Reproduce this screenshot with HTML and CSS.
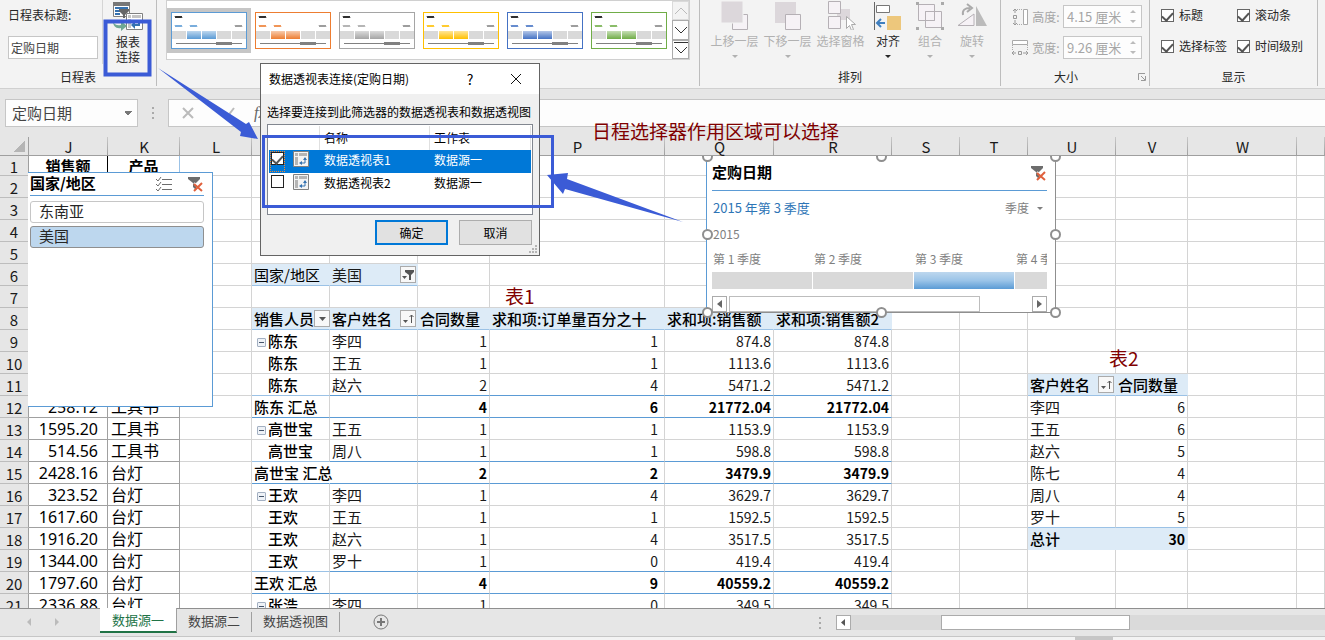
FILE: index.html
```
<!DOCTYPE html>
<html lang="zh-CN">
<head>
    <meta charset="UTF-8">
    <meta name="viewport" content="width=device-width, initial-scale=1.0">
    <title>数据透视表连接</title>
    <link rel="stylesheet" href="styles.css">
</head>
<body>

<svg class="defs" aria-hidden="true">
    <defs>
        <linearGradient id="fade" x1="0" y1="0" x2="0" y2="1">
            <stop offset="0" stop-color="#fff" stop-opacity="0.6"/>
            <stop offset="1" stop-color="#fff" stop-opacity="0"/>
        </linearGradient>
        <symbol id="thumb" viewBox="0 0 74 35">
            <path d="M3 3l1 2 1-2 1 2 1-2 1 2 1-2 1 2" fill="none" stroke="#000"/>
            <path d="M3 12l1 2 1-2 1 2 1-2 1 2 1-2 1 2M18 12l1 2 1-2 1 2 1-2 1 2 1-2 1 2" fill="none" stroke="currentColor"/>
            <path d="M63 12l1 2 1-2 1 2 1-2 1 2 1-2 1 2" fill="none" stroke="#888"/>
            <path d="M0 18h14v8H0zM45 18h14v8H45zM60 18h14v8H60z" fill="#d9d9d9"/>
            <path d="M15 18h14v8H15zM30 18h14v8H30z" fill="currentColor"/>
            <path d="M15 18h14v8H15zM30 18h14v8H30z" fill="url(#fade)"/>
            <path d="M4 30h66v1H4z" fill="#808080"/>
            <path d="M44 29h16v3H44z" fill="#808080"/>
        </symbol>
        <symbol id="clear-filter" viewBox="0 0 17 17">
            <path d="M1 1h12v2L9 7v6H8L6 11V7L1 3z" fill="#6d6d6d"/>
            <path d="M7 7l10 10M17 7L7 17" stroke="#fff" stroke-width="2"/>
            <path d="M7 8l8 7M15 7l-8 8" stroke="#e0603c" stroke-width="2"/>
        </symbol>
        <symbol id="pivot" viewBox="0 0 16 16">
            <path d="M.5.5h15v15H.5z" fill="#f4f4f4" stroke="#808080"/>
            <path d="M2 2h3v3H2zM6 2h8v3H6zM2 6h3v8H2z" fill="#b5b5b5"/>
            <path d="M8 12h4V7" fill="none" stroke="#3572b0"/>
            <path d="M6 12l3-2v4zM12 6l2 3h-4z" fill="#3572b0"/>
        </symbol>
        <symbol id="sort" viewBox="0 0 14 14">
            <path d="M2 8h5L4.500 11z" fill="#555"/>
            <path d="M10.500 3v8M8.500 5l2-2 2 2" fill="none" stroke="#555"/>
        </symbol>
    </defs>
</svg>

<header class="ribbon">
    <section class="group group-caption">
        <div class="group-body">
            <div class="caption-field">
                <label for="caption">日程表标题:</label>
                <input type="text" id="caption" value="定购日期">
            </div>
            <button class="report-btn" type="button">
                <svg width="32" height="30" viewBox="0 0 32 30">
                    <path d="M1.500 1.500h16v14h-16z" fill="#fff" stroke="#808080"/>
                    <path d="M1 1h17v4H1z" fill="#777"/>
                    <path d="M3 7h13M3 10h5M3 13h5" stroke="#3572b0" stroke-width="2"/>
                    <path d="M7 8h10v2l-4 4v3h-2v-3l-4-4z" fill="#666"/>
                    <path d="M14.500 12.500h16v16h-16z" fill="#fff" stroke="#808080"/>
                    <path d="M16 14h3v3h-3zM20 14h9v3h-9zM16 18h3v9h-3z" fill="#c4c4c4"/>
                    <path d="M22 24h5v-5" fill="none" stroke="#3572b0" stroke-width="2"/>
                    <path d="M19 24l4-4v8z" fill="#3572b0"/>
                    <path d="M1 20c1 4 5 5 8 4v-4l6 5-6 5v-3C4 28 1 25 1 20z" fill="#6fa893"/>
                </svg>
                <span>报表<br>连接</span>
            </button>
        </div>
        <h2>日程表</h2>
    </section>

    <section class="group group-styles">
        <div class="gallery">
            <div class="thumbs">
                <button class="thumb blue selected" type="button" aria-label="浅蓝"><svg><use href="#thumb"/></svg></button>
                <button class="thumb orange" type="button" aria-label="橙色"><svg><use href="#thumb"/></svg></button>
                <button class="thumb gray" type="button" aria-label="灰色"><svg><use href="#thumb"/></svg></button>
                <button class="thumb gold" type="button" aria-label="金色"><svg><use href="#thumb"/></svg></button>
                <button class="thumb navy" type="button" aria-label="蓝色"><svg><use href="#thumb"/></svg></button>
                <button class="thumb green" type="button" aria-label="绿色"><svg><use href="#thumb"/></svg></button>
            </div>
            <div class="gallery-scroll">
                <button type="button" aria-label="上一行" disabled><svg width="16" height="16"><path d="M2 11l6-6 6 6" fill="none" stroke="#bbb"/></svg></button>
                <button type="button" aria-label="下一行"><svg width="16" height="16"><path d="M2 5l6 6 6-6" fill="none" stroke="#333"/></svg></button>
                <button type="button" aria-label="其他"><svg width="16" height="16"><path d="M1 1.500h14M2 6l6 6 6-6" fill="none" stroke="#333"/></svg></button>
            </div>
        </div>
    </section>

    <section class="group group-arrange">
        <div class="group-body">
            <button class="tool wide" type="button" disabled>
                <svg width="30" height="30"><path d="M12.500 14.500h15v15h-15z" fill="#f6f2f6" stroke="#b5b0b5"/><path d="M1 1h22v22H1z" fill="#dcd7db" stroke="#f3f3f3"/></svg>
                上移一层<i class="caret"></i>
            </button>
            <button class="tool wide" type="button" disabled>
                <svg width="30" height="30"><path d="M2 2h21v21H2z" fill="#dcd7db"/><path d="M12.500 14.500h15v15h-15z" fill="#f6f2f6" stroke="#b5b0b5"/></svg>
                下移一层<i class="caret"></i>
            </button>
            <button class="tool wide" type="button" disabled>
                <svg width="30" height="30"><path d="M11 9h13v11H11z" fill="#dcd7db"/><path d="M2.500 1.500h12v12h-12zM2.500 16.500h12v12h-12z" fill="#f6f2f6" stroke="#b5b0b5"/><path d="M20.500 16.500v12l3-3 2 5 2-1-2-5h4z" fill="#fff" stroke="#aaa"/></svg>
                选择窗格<i class="caret hidden"></i>
            </button>
            <button class="tool" type="button">
                <svg width="30" height="30"><path d="M1.500 2v28" stroke="#666"/><path d="M3.500 5.500h13v7h-13z" fill="#fff" stroke="#777"/><path d="M14 16h14v14H14z" fill="#edc77c"/><path d="M4 23h8M8 19l-4 4 4 4" fill="none" stroke="#3f7fbf" stroke-width="2"/></svg>
                对齐<i class="caret"></i>
            </button>
            <button class="tool" type="button" disabled>
                <svg width="30" height="30"><path d="M3.500 4.500h16v16h-16zM10.500 11.500h16v16h-16z" fill="#f6f2f6" stroke="#b5b0b5"/><path d="M10.500 11.500h9v9h-9z" fill="none" stroke="#b5b0b5"/><path d="M1 2h3v3H1zM26 2h3v3h-3zM1 27h3v3H1zM26 27h3v3h-3z" fill="#aaa"/></svg>
                组合<i class="caret"></i>
            </button>
            <button class="tool" type="button" disabled>
                <svg width="32" height="30"><path d="M2 25.500h16V14z" fill="#f6f2f6" stroke="#b5b0b5"/><path d="M20 6v20h11z" fill="#bbb"/><path d="M7 15c-1-5 2-7 7-7M11 4l5 4-5 4" fill="none" stroke="#aaa" stroke-width="2"/></svg>
                旋转<i class="caret"></i>
            </button>
        </div>
        <h2>排列</h2>
    </section>

    <section class="group group-size">
        <div class="size-rows">
            <div class="size-row">
                <svg width="18" height="18"><path d="M12.500 1.500h4v15h-4z" fill="#fff" stroke="#aaa"/><path d="M4 1v4M4 12v5M2 3l2-2 2 2M2 15l2 2 2-2M2.500 7.500h3v3h-3z" fill="none" stroke="#999"/><path d="M6 1.500h6M6 16.500h6" stroke="#aaa" stroke-dasharray="1 1"/></svg>
                <label for="height">高度:</label>
                <span class="spin"><input type="text" id="height" value="4.15 厘米" disabled><i></i></span>
            </div>
            <div class="size-row">
                <svg width="18" height="18"><path d="M1.500 1.500h15v4h-15z" fill="#fff" stroke="#aaa"/><path d="M1 14h4M12 14h5M3 12l-2 2 2 2M15 12l2 2-2 2M7.500 12.500h3v3h-3z" fill="none" stroke="#999"/><path d="M1.500 6v6M16.500 6v6" stroke="#aaa" stroke-dasharray="1 1"/></svg>
                <label for="width">宽度:</label>
                <span class="spin"><input type="text" id="width" value="9.26 厘米" disabled><i></i></span>
            </div>
        </div>
        <h2>大小
            <button class="launcher" type="button" aria-label="大小和属性"><svg width="8" height="8"><path d="M.5 7V.5H7M3 3l4 4M7.500 3v4.500H3" fill="none" stroke="#999"/></svg></button>
        </h2>
    </section>

    <section class="group group-show">
        <div class="checks">
            <label><input type="checkbox" checked>标题</label>
            <label><input type="checkbox" checked>滚动条</label>
            <label><input type="checkbox" checked>选择标签</label>
            <label><input type="checkbox" checked>时间级别</label>
        </div>
        <h2>显示</h2>
    </section>
</header>

<div class="formula-row">
    <select class="name-box" aria-label="名称框"><option>定购日期</option></select>
    <span class="dots"></span>
    <div class="formula-box">
        <button type="button" aria-label="取消输入"><svg width="12" height="12"><path d="M1 1l10 10M11 1L1 11" stroke="#bbb" stroke-width="2"/></svg></button>
        <button type="button" aria-label="输入"><svg width="12" height="12"><path d="M1 6l3 4 7-9" fill="none" stroke="#bbb" stroke-width="2"/></svg></button>
        <button type="button" class="fx">fx</button>
        <input type="text" aria-label="编辑栏">
    </div>
</div>

<main class="sheet">
    <table class="grid">
        <colgroup>
            <col class="w-head"><col class="w-j"><col class="w-72"><col class="w-72"><col class="w-m"><col class="w-88"><col class="w-72"><col class="w-p"><col class="w-109"><col class="w-r"><col class="w-68"><col class="w-68"><col class="w-88"><col class="w-72"><col class="w-109"><col>
        </colgroup>
        <thead>
            <tr><th class="corner"></th><th>J</th><th>K</th><th>L</th><th>M</th><th>N</th><th>O</th><th>P</th><th>Q</th><th>R</th><th>S</th><th>T</th><th>U</th><th>V</th><th>W</th><th></th></tr>
        </thead>
        <tbody>
            <tr class="first"><th>1</th><td>销售额</td><td>产品</td><td></td><td></td><td></td><td></td><td></td><td></td><td></td><td></td><td></td><td></td><td></td><td></td><td></td></tr>
            <tr><th>2</th><td></td><td></td><td></td><td></td><td></td><td></td><td></td><td></td><td></td><td></td><td></td><td></td><td></td><td></td><td></td></tr>
            <tr><th>3</th><td></td><td></td><td></td><td></td><td></td><td></td><td></td><td></td><td></td><td></td><td></td><td></td><td></td><td></td><td></td></tr>
            <tr><th>4</th><td></td><td></td><td></td><td></td><td></td><td></td><td></td><td></td><td></td><td></td><td></td><td></td><td></td><td></td><td></td></tr>
            <tr><th>5</th><td></td><td></td><td></td><td></td><td></td><td></td><td></td><td></td><td></td><td></td><td></td><td></td><td></td><td></td><td></td></tr>
            <tr><th>6</th><td></td><td></td><td></td><td class="fill">国家/地区</td><td class="fill"><span class="with-btn">美国<button type="button" aria-label="筛选"><svg width="14" height="14"><path d="M1 8h5l-2.500 3z" fill="#555"/><path d="M4 2h9v2L10 7v5H8V7L4 4z" fill="#555"/></svg></button></span></td><td></td><td></td><td></td><td></td><td></td><td></td><td></td><td></td><td></td><td></td></tr>
            <tr><th>7</th><td></td><td></td><td></td><td></td><td></td><td></td><td></td><td></td><td></td><td></td><td></td><td></td><td></td><td></td><td></td></tr>
            <tr class="pivot-head"><th>8</th><td></td><td></td><td></td><td class="fill"><span class="with-btn">销售人员<button type="button" aria-label="筛选"><svg width="14" height="14"><path d="M4 5h7L7.500 9z" fill="#555"/></svg></button></span></td><td class="fill"><span class="with-btn">客户姓名<button type="button" aria-label="排序"><svg width="14" height="14"><use href="#sort"/></svg></button></span></td><td class="fill">合同数量</td><td class="fill">求和项:订单量百分之十</td><td class="fill">求和项:销售额</td><td class="fill">求和项:销售额2</td><td></td><td></td><td></td><td></td><td></td><td></td></tr>
            <tr><th>9</th><td></td><td></td><td></td><td><button class="fold" type="button" aria-label="折叠"></button>陈东</td><td>李四</td><td>1</td><td>1</td><td>874.8</td><td>874.8</td><td></td><td></td><td></td><td></td><td></td><td></td></tr>
            <tr><th>10</th><td></td><td></td><td></td><td class="indent">陈东</td><td>王五</td><td>1</td><td>1</td><td>1113.6</td><td>1113.6</td><td></td><td></td><td></td><td></td><td></td><td></td></tr>
            <tr class="rule"><th>11</th><td></td><td></td><td></td><td class="indent">陈东</td><td>赵六</td><td>2</td><td>4</td><td>5471.2</td><td>5471.2</td><td></td><td></td><td class="fill"><span class="with-btn">客户姓名<button type="button" aria-label="排序"><svg width="14" height="14"><use href="#sort"/></svg></button></span></td><td class="fill">合同数量</td><td></td><td></td></tr>
            <tr class="rule total"><th>12</th><td>258.12</td><td>工具书</td><td></td><td>陈东 汇总</td><td></td><td>4</td><td>6</td><td>21772.04</td><td>21772.04</td><td></td><td></td><td>李四</td><td>6</td><td></td><td></td></tr>
            <tr><th>13</th><td>1595.20</td><td>工具书</td><td></td><td><button class="fold" type="button" aria-label="折叠"></button>高世宝</td><td>王五</td><td>1</td><td>1</td><td>1153.9</td><td>1153.9</td><td></td><td></td><td>王五</td><td>6</td><td></td><td></td></tr>
            <tr class="rule"><th>14</th><td>514.56</td><td>工具书</td><td></td><td class="indent">高世宝</td><td>周八</td><td>1</td><td>1</td><td>598.8</td><td>598.8</td><td></td><td></td><td>赵六</td><td>5</td><td></td><td></td></tr>
            <tr class="rule total"><th>15</th><td>2428.16</td><td>台灯</td><td></td><td class="spill">高世宝 汇总</td><td></td><td>2</td><td>2</td><td>3479.9</td><td>3479.9</td><td></td><td></td><td>陈七</td><td>4</td><td></td><td></td></tr>
            <tr><th>16</th><td>323.52</td><td>台灯</td><td></td><td><button class="fold" type="button" aria-label="折叠"></button>王欢</td><td>李四</td><td>1</td><td>4</td><td>3629.7</td><td>3629.7</td><td></td><td></td><td>周八</td><td>4</td><td></td><td></td></tr>
            <tr><th>17</th><td>1617.60</td><td>台灯</td><td></td><td class="indent">王欢</td><td>王五</td><td>1</td><td>1</td><td>1592.5</td><td>1592.5</td><td></td><td></td><td class="last">罗十</td><td class="last">5</td><td></td><td></td></tr>
            <tr><th>18</th><td>1916.20</td><td>台灯</td><td></td><td class="indent">王欢</td><td>赵六</td><td>1</td><td>4</td><td>3517.5</td><td>3517.5</td><td></td><td></td><td class="fill sum">总计</td><td class="fill sum">30</td><td></td><td></td></tr>
            <tr class="rule"><th>19</th><td>1344.00</td><td>台灯</td><td></td><td class="indent">王欢</td><td>罗十</td><td>1</td><td>0</td><td>419.4</td><td>419.4</td><td></td><td></td><td></td><td></td><td></td><td></td></tr>
            <tr class="rule total"><th>20</th><td>1797.60</td><td>台灯</td><td></td><td>王欢 汇总</td><td></td><td>4</td><td>9</td><td>40559.2</td><td>40559.2</td><td></td><td></td><td></td><td></td><td></td><td></td></tr>
            <tr><th>21</th><td>2336.88</td><td>台灯</td><td></td><td><button class="fold" type="button" aria-label="折叠"></button>张浩</td><td>李四</td><td>1</td><td>0</td><td>349.5</td><td>349.5</td><td></td><td></td><td></td><td></td><td></td><td></td></tr>
        </tbody>
    </table>

    <!-- floating objects over the cells -->
    <div class="objects">
        <section class="slicer">
            <div class="slicer-head">
                <h3>国家/地区</h3>
                <button type="button" aria-label="多选"><svg width="17" height="16"><path d="M1 3l2 2 3-4M1 8l2 2 3-4M1 13l2 2 3-4" fill="none" stroke="#6d6d6d"/><path d="M7 3.500h10M7 8.500h10M7 13.500h10" stroke="#6d6d6d"/></svg></button>
                <button type="button" aria-label="清除筛选器"><svg width="17" height="17"><use href="#clear-filter"/></svg></button>
            </div>
            <button class="slicer-item" type="button">东南亚</button>
            <button class="slicer-item on" type="button">美国</button>
        </section>

        <section class="timeline">
            <div class="timeline-head">
                <h3>定购日期</h3>
                <button type="button" aria-label="清除筛选器"><svg width="17" height="17"><use href="#clear-filter"/></svg></button>
            </div>
            <div class="timeline-range">
                <span>2015 年第 3 季度</span>
                <button type="button">季度<i class="caret"></i></button>
            </div>
            <div class="timeline-year">2015</div>
            <div class="quarters">
                <span>第 1 季度</span><span>第 2 季度</span><span>第 3 季度</span><span>第 4 季度</span>
                <b></b><b></b><b class="on"></b><b></b>
            </div>
            <div class="timeline-scroll">
                <button type="button" aria-label="向左"><svg width="13" height="14"><path d="M9 3v8L4 7z" fill="#666"/></svg></button>
                <span></span>
                <button type="button" aria-label="向右"><svg width="13" height="14"><path d="M4 3v8l5-4z" fill="#666"/></svg></button>
            </div>
            <i class="handle n w"></i><i class="handle n c"></i><i class="handle n e"></i>
            <i class="handle m w"></i><i class="handle m e"></i>
            <i class="handle s w"></i><i class="handle s c"></i><i class="handle s e"></i>
        </section>

        <p class="note note-table1">表1</p>
        <p class="note note-table2">表2</p>
    </div>
</main>

<footer class="tabs">
    <div class="tab-nav">
        <button type="button" aria-label="上一张"><svg width="6" height="8"><path d="M5 0v8L1 4z" fill="#bbb"/></svg></button>
        <button type="button" aria-label="下一张"><svg width="6" height="8"><path d="M1 0v8l4-4z" fill="#bbb"/></svg></button>
    </div>
    <button class="tab active" type="button">数据源一</button>
    <button class="tab" type="button">数据源二</button>
    <button class="tab" type="button">数据透视图</button>
    <button class="add" type="button" aria-label="新工作表"><svg width="16" height="16"><circle cx="8" cy="8" r="7" fill="none" stroke="#777"/><path d="M8 4v8M4 8h8" stroke="#777" stroke-width="2"/></svg></button>
    <span class="dots"></span>
    <div class="hscroll">
        <button type="button" aria-label="向左滚动"><svg width="13" height="13"><path d="M8 3v7L4 6.500z" fill="#555"/></svg></button>
        <span></span>
    </div>
</footer>
<div class="status"><span></span></div>

<div class="dialog" role="dialog" aria-labelledby="dialogTitle">
    <div class="dialog-title">
        <h2 id="dialogTitle">数据透视表连接(定购日期)</h2>
        <button type="button" aria-label="帮助">?</button>
        <button type="button" aria-label="关闭"><svg width="12" height="12"><path d="M1 1l10 10M11 1L1 11" stroke="#111"/></svg></button>
    </div>
    <p>选择要连接到此筛选器的数据透视表和数据透视图</p>
    <div class="list">
        <table>
            <thead><tr><th></th><th>名称</th><th>工作表</th></tr></thead>
            <tbody>
                <tr class="selected">
                    <td><span class="pick"><span class="focus"><input type="checkbox" aria-label="数据透视表1" checked></span><svg width="16" height="16"><use href="#pivot"/></svg></span></td>
                    <td>数据透视表1</td><td>数据源一</td>
                </tr>
                <tr>
                    <td><span class="pick"><span class="focus"><input type="checkbox" aria-label="数据透视表2"></span><svg width="16" height="16"><use href="#pivot"/></svg></span></td>
                    <td>数据透视表2</td><td>数据源一</td>
                </tr>
            </tbody>
        </table>
    </div>
    <div class="dialog-buttons">
        <button class="ok" type="button">确定</button>
        <button type="button">取消</button>
    </div>
    <svg class="grip" width="8" height="8"><path d="M6 0h2v2H6zM3 3h2v2H3zM6 3h2v2H6zM0 6h2v2H0zM3 6h2v2H3zM6 6h2v2H6z" fill="#b5b5b5"/></svg>
</div>

<p class="note note-area">日程选择器作用区域可以选择</p>

<!-- boxes and arrows -->
<svg class="marks" width="700" height="240" aria-hidden="true">
    <path d="M105.500 21.500h44v53h-44z" fill="none" stroke="#3b5bd6" stroke-width="4"/>
    <path d="M263.500 136.500h289v70h-289z" fill="none" stroke="#3b5bd6" stroke-width="3"/>
    <path d="M158 68l88 56 3-2 9 17-18-3 1-4z" fill="#3b5bd6"/>
    <path d="M683 222l-118-33-2 5-16-19 21-2-1 6z" fill="#3b5bd6"/>
</svg>

</body>
</html>
```

FILE: styles.css
```
* {
    box-sizing: border-box;
}
body {
    margin: 0;
    height: 100vh;
    display: flex;
    flex-direction: column;
    overflow: hidden;
    position: relative;
    background-color: #e6e6e6;
    font-family: "Noto Sans CJK SC", sans-serif;
    font-size: 12px;
    line-height: 18px;
    color: #262626;
}
h2, h3, p {
    margin: 0;
    font-size: 12px;
    font-weight: normal;
}
button, input, select {
    font: inherit;
    color: inherit;
    margin: 0;
    padding: 0;
    border: none;
    background: none;
    border-radius: 0;
}
svg {
    display: block;
    flex: none;
}
.defs {
    position: absolute;
    width: 0;
    height: 0;
}
.caret {
    display: block;
    width: 6px;
    border: 3px solid transparent;
    border-top-color: currentColor;
    border-bottom: none;
}
.caret.hidden {
    visibility: hidden;
}
.dots {
    width: 2px;
    height: 12px;
    background: repeating-linear-gradient(#aaa 0 2px, transparent 2px 5px);
}

/* ribbon */
.ribbon {
    flex: none;
    display: flex;
    height: 89px;
    background-color: #f3f3f3;
    border-bottom: 1px solid #d0d0d0;
}
.group {
    flex: none;
    display: flex;
    flex-direction: column;
    justify-content: space-between;
    height: 86px;
    border-right: 1px solid #bdbdbd;
}
.group h2 {
    text-align: center;
}
.group-body {
    display: flex;
}
.group-caption {
    width: 157px;
}
.caption-field {
    width: 103px;
    padding: 6px 4px 0 8px;
    border-right: 1px solid #d5d5d5;
}
.caption-field label {
    display: block;
}
.caption-field input {
    width: 90px;
    height: 23px;
    margin-top: 12px;
    padding: 0 2px;
    background-color: #fff;
    border: 1px solid #c6c6c6;
    color: #444;
}
.report-btn {
    width: 50px;
    padding-top: 1px;
    display: flex;
    flex-direction: column;
    align-items: center;
    gap: 3px;
    line-height: 15px;
}
.group-styles {
    width: 543px;
    padding: 0 9px;
}
.gallery {
    display: flex;
    height: 60px;
    background-color: #fff;
    border: 1px solid #d0d0d0;
}
.thumbs {
    flex: 1;
    display: flex;
    align-items: center;
}
.thumb {
    width: 84px;
    height: 45px;
    padding: 4px;
}
.thumb svg {
    width: 76px;
    height: 37px;
    border: 1px solid currentColor;
    background-color: #fff;
}
.thumb.selected {
    background-color: #c6c6c6;
}
.blue { color: #5b9bd5; }
.orange { color: #ed7d31; }
.gray { color: #a5a5a5; }
.gold { color: #ffc000; }
.navy { color: #4472c4; }
.green { color: #70ad47; }
.gallery-scroll {
    display: flex;
    flex-direction: column;
    width: 17px;
}
.gallery-scroll button {
    flex: 1;
    display: flex;
    justify-content: center;
    align-items: center;
    background-color: #fdfdfd;
    border: 1px solid #ababab;
    overflow: hidden;
}
.gallery-scroll button:disabled {
    border-color: #dadada;
    background-color: #f3f3f3;
}
.group-arrange {
    width: 301px;
}
.group-arrange .group-body {
    padding-left: 8px;
}
.tool {
    width: 42px;
    display: flex;
    flex-direction: column;
    align-items: center;
    line-height: 22px;
    white-space: nowrap;
}
.tool.wide {
    width: 53px;
}
.tool:disabled {
    color: #b1b1b1;
}
.tool .caret {
    margin-top: 3px;
}
.group-size {
    width: 149px;
}
.size-rows {
    display: flex;
    flex-direction: column;
    gap: 8px;
    padding: 5px 7px 0 10px;
}
.size-row {
    display: flex;
    align-items: center;
    justify-content: space-between;
    color: #a6a6a6;
}
.spin {
    display: flex;
    align-items: center;
    width: 79px;
    height: 23px;
    padding: 0 5px 0 3px;
    background-color: #fdfdfd;
    border: 1px solid #c6c6c6;
}
.spin input {
    flex: 1;
    min-width: 0;
    font-size: 13px;
    color: #a6a6a6;
}
.spin i {
    width: 6px;
    height: 13px;
    background-color: #bbb;
    clip-path: polygon(50% 0, 100% 3px, 0 3px, 0 10px, 100% 10px, 50% 100%, 0 10px, 0 3px);
}
.group-size h2 {
    display: flex;
    align-items: center;
    justify-content: flex-end;
    gap: 60px;
    padding-right: 3px;
}
.group-show {
    width: 168px;
}
.checks {
    display: grid;
    grid-template-columns: 76px 1fr;
    row-gap: 13px;
    padding: 6px 0 0 11px;
}
.checks label {
    display: flex;
    align-items: center;
    gap: 5px;
    white-space: nowrap;
}
input[type="checkbox"] {
    appearance: none;
    flex: none;
    display: flex;
    justify-content: center;
    width: 13px;
    height: 13px;
    background-color: #fff;
    border: 1px solid #666;
}
input[type="checkbox"]:checked::after {
    content: "";
    width: 5px;
    height: 9px;
    border: solid #555;
    border-width: 0 2px 2px 0;
    transform: rotate(42deg);
}

/* name box and formula bar */
.formula-row {
    flex: none;
    display: flex;
    align-items: center;
    padding: 10px 0 0 5px;
}
.name-box {
    appearance: none;
    width: 133px;
    height: 28px;
    padding: 0 6px;
    font-size: 15px;
    color: #444;
    border: 1px solid #c6c6c6;
    background: conic-gradient(from 315deg at 50% 4px, #777 90deg, transparent 0) no-repeat right 5px center / 8px 4px, #fdfdfd;
}
.formula-row .dots {
    margin: 0 14px;
}
.formula-box {
    flex: 1;
    display: flex;
    align-items: center;
    gap: 3px;
    height: 28px;
    background-color: #fdfdfd;
    border: 1px solid #c6c6c6;
    border-right: none;
}
.formula-box button {
    display: flex;
    justify-content: center;
    width: 38px;
}
.formula-box .fx {
    width: 30px;
    padding-left: 3px;
    justify-content: flex-start;
    font: italic 16px "Liberation Serif", serif;
    color: #666;
}
.formula-box input {
    flex: 1;
}

/* cells */
.sheet {
    flex: 1;
    min-height: 0;
    position: relative;
    overflow: hidden;
    background-color: #fff;
}
.grid {
    width: 100%;
    table-layout: fixed;
    border-collapse: separate;
    border-spacing: 0;
    font-size: 15px;
    line-height: 20px;
    color: #1a1a1a;
}
.w-head { width: 29px; }
.w-j { width: 79px; }
.w-72 { width: 72px; }
.w-m { width: 78px; }
.w-88 { width: 88px; }
.w-p { width: 175px; }
.w-109 { width: 109px; }
.w-r { width: 118px; }
.w-68 { width: 68px; }
.grid th {
    padding: 0;
    font-weight: normal;
    background-color: #e6e6e6;
}
.grid thead th {
    height: 29px;
    padding-top: 11px;
    line-height: 17px;
    border-bottom: 1px solid #9f9f9f;
    background: linear-gradient(#c8c8c8, #a0a0a0) no-repeat right bottom / 1px 18px, #e6e6e6;
}
.grid thead .corner {
    background: linear-gradient(#a0a0a0, #a0a0a0) no-repeat right bottom / 1px 18px,
        linear-gradient(135deg, transparent 50%, #b5b5b5 50%) no-repeat 13px 14px / 12px 11px, #e6e6e6;
}
.grid tbody th {
    padding-top: 3px;
    line-height: 18px;
    border-right: 1px solid #9f9f9f;
    border-bottom: 1px solid #bdbdbd;
}
.grid td {
    height: 22px;
    padding: 0 2px;
    border-right: 1px solid #d4d4d4;
    border-bottom: 1px solid #d4d4d4;
    white-space: nowrap;
}
.grid .first th,
.grid .first td {
    height: 20px;
    padding-top: 2px;
    line-height: 17px;
}
.grid td:nth-child(2),
.grid td:nth-child(3) {
    font-family: "Noto Sans", "Noto Sans CJK SC", sans-serif;
    font-size: 16px;
    border-color: #a0a0a0;
    color: #000;
}
.grid td:nth-child(2) {
    padding-right: 9px;
    text-align: right;
}
.grid td:nth-child(3) {
    padding-left: 3px;
}
.grid .first td:nth-child(2),
.grid .first td:nth-child(3) {
    padding: 2px 0 0;
    font-size: 15px;
    font-weight: bold;
    text-align: center;
    border-right-color: #000;
}
.grid .first td:nth-child(3) {
    border-right-color: #9bc2e6;
}
.grid td:nth-child(7),
.grid td:nth-child(8),
.grid td:nth-child(9),
.grid td:nth-child(10),
.grid td:nth-child(14) {
    font-size: 14px;
    text-align: right;
}
.grid td:nth-child(8) {
    padding-right: 6px;
}
.grid td:nth-child(5) {
    font-weight: 500;
    color: #000;
}
.grid td.fill {
    background-color: #ddebf7;
    border-right-color: #ddebf7;
    border-bottom-color: #9bc2e6;
}
.grid tr:not(.pivot-head) td.fill:nth-child(5) {
    font-weight: normal;
}
.grid .pivot-head td.fill,
.grid .rule td.fill,
.grid td.sum {
    font-size: 15px;
    font-weight: 500;
    text-align: left;
    color: #000;
}
.grid td.sum {
    border-bottom-color: #ddebf7;
}
.grid td.sum:nth-child(14) {
    font-size: 14px;
    font-weight: bold;
    text-align: right;
}
.grid td.last {
    border-bottom-color: #9bc2e6;
}
.grid .rule td:nth-child(n+5):nth-child(-n+10) {
    border-bottom-color: #5b9bd5;
}
.grid .rule:not(.total) td:nth-child(5):nth-child(-n+10) {
    border-bottom-color: #9bc2e6;
}
.grid .total td:nth-child(n+7):nth-child(-n+10) {
    font-weight: bold;
    color: #000;
}
.grid td.spill {
    border-right-color: transparent;
}
.grid td.indent {
    padding-left: 16px;
}
.fold {
    display: inline-block;
    width: 9px;
    height: 9px;
    margin: 0 2px 0 3px;
    vertical-align: 1px;
    border: 1px solid #a3b0c2;
    border-radius: 1px;
    background: linear-gradient(#44546a, #44546a) no-repeat center / 5px 1px, #eef2f7;
}
.with-btn {
    display: flex;
    align-items: center;
    justify-content: space-between;
    margin-right: -1px;
}
.with-btn button {
    flex: none;
    width: 16px;
    height: 17px;
    border: 1px solid #ababab;
    background-color: #f8f8f8;
}

/* floating objects */
.objects {
    position: absolute;
    inset: 29px 0 0 28px;
    overflow: hidden;
}
.slicer {
    position: absolute;
    left: 0;
    top: 16px;
    width: 185px;
    height: 235px;
    padding: 0 8px 0 2px;
    background-color: #fff;
    border: 1px solid #5b9bd5;
    border-left: none;
    font-size: 15px;
}
.slicer-head {
    display: flex;
    align-items: center;
    gap: 15px;
    height: 23px;
    margin-bottom: 5px;
    border-bottom: 1px solid #5b9bd5;
}
.slicer-head h3,
.timeline-head h3 {
    flex: 1;
    padding-bottom: 2px;
    font-size: 15px;
    font-weight: bold;
    color: #000;
}
.slicer-item {
    display: block;
    width: 100%;
    height: 22px;
    margin-bottom: 3px;
    padding: 0 0 2px 8px;
    text-align: left;
    line-height: 18px;
    border: 1px solid #c6c6c6;
    border-radius: 3px;
}
.slicer-item.on {
    background-color: #bdd7ee;
    border-color: #8f8f8f;
}
.timeline {
    position: absolute;
    left: 678px;
    top: -1px;
    width: 350px;
    height: 158px;
    padding: 0 8px 0 5px;
    background-color: #fff;
    border: 1px solid #8f8f8f;
    border-left: 1px solid #5b9bd5;
    color: #7f7f7f;
}
.timeline-head {
    display: flex;
    align-items: center;
    height: 35px;
    border-bottom: 1px solid #5b9bd5;
}
.timeline-range {
    display: flex;
    align-items: center;
    justify-content: space-between;
    height: 34px;
    padding-left: 1px;
    font-size: 13px;
    color: #2e75b6;
}
.timeline-range button {
    display: flex;
    align-items: center;
    gap: 8px;
    padding-right: 4px;
    font-size: 12px;
    color: #7f7f7f;
}
.timeline-year {
    padding-left: 1px;
}
.quarters {
    display: grid;
    grid-template-columns: repeat(4, 100px);
    column-gap: 1px;
    margin-top: 7px;
    overflow: hidden;
}
.quarters span {
    height: 22px;
    padding-left: 1px;
}
.quarters b {
    height: 17px;
    background-color: #d9d9d9;
}
.quarters .on {
    background: linear-gradient(#bdd7ee, #9bc4e8 50%, #5b9bd5);
}
.timeline-scroll {
    display: flex;
    gap: 2px;
    margin-top: 7px;
}
.timeline-scroll button {
    width: 15px;
    height: 16px;
    border: 1px solid #ababab;
}
.timeline-scroll span {
    width: 251px;
    border: 1px solid #bdbdbd;
}
.timeline-scroll button:last-child {
    margin-left: auto;
}
.handle {
    position: absolute;
    width: 11px;
    height: 11px;
    margin: -5px;
    border: 2px solid #8f8f8f;
    border-radius: 50%;
    background-color: #fff;
}
.handle.n { top: 0; }
.handle.m { top: 50%; }
.handle.s { top: 100%; }
.handle.w { left: 0; }
.handle.c { left: 50%; }
.handle.e { left: 100%; }
.note {
    position: absolute;
    font-size: 19px;
    line-height: 24px;
    color: #800000;
    white-space: nowrap;
}
.note-table1 {
    left: 477px;
    top: 128px;
}
.note-table2 {
    left: 1081px;
    top: 190px;
}
.note-area {
    left: 592px;
    top: 119px;
}

/* sheet tabs */
.tabs {
    flex: none;
    display: flex;
    align-items: flex-start;
    height: 29px;
    border-top: 1px solid #8f8f8f;
    border-bottom: 1px solid #c6c6c6;
    font-size: 13px;
    color: #444;
}
.tab-nav {
    display: flex;
    gap: 22px;
    width: 100px;
    padding: 9px 0 0 26px;
}
.tab {
    height: 20px;
    margin-top: 3px;
    padding: 0 11px 3px;
    line-height: 16px;
    border-right: 1px solid #a0a0a0;
}
.tab.active {
    height: 25px;
    margin-top: -1px;
    padding: 0 12px;
    line-height: 23px;
    color: #217346;
    background-color: #fff;
    border-bottom: 2px solid #217346;
}
.add {
    padding: 5px 0 0 33px;
}
.tabs .dots {
    margin: 8px 15px 0 auto;
}
.hscroll {
    display: flex;
    width: 489px;
    height: 15px;
    margin-top: 6px;
    background-color: #dadada;
}
.hscroll button {
    width: 15px;
    background-color: #fff;
    border: 1px solid #ababab;
}
.hscroll span {
    width: 189px;
    margin-left: 90px;
    background-color: #fff;
    border: 1px solid #ababab;
}
.status {
    flex: none;
    display: flex;
    justify-content: flex-end;
    height: 3px;
    padding-right: 212px;
    background-color: #f3f3f3;
}
.status span {
    width: 38px;
    background-color: #c6c6c6;
}

/* dialog */
.dialog {
    position: absolute;
    left: 260px;
    top: 63px;
    width: 280px;
    padding-bottom: 10px;
    background-color: #f0f0f0;
    border: 1px solid #646464;
    color: #000;
}
.dialog-title {
    display: flex;
    align-items: center;
    height: 30px;
    padding-left: 8px;
    background-color: #fff;
}
.dialog-title h2 {
    flex: 1;
}
.dialog-title button {
    display: flex;
    justify-content: center;
    width: 46px;
    font-size: 14px;
}
.dialog p {
    padding: 9px 0 3px 6px;
    white-space: nowrap;
}
.list {
    height: 91px;
    margin: 0 6px;
    padding: 1px;
    background-color: #fff;
    border: 1px solid #828790;
}
.list table {
    width: 100%;
    table-layout: fixed;
    border-collapse: separate;
    border-spacing: 0;
}
.list th {
    height: 24px;
    padding: 0 4px;
    font-weight: normal;
    text-align: left;
    border-right: 1px solid #e0e0e0;
}
.list th:nth-child(1) { width: 51px; }
.list th:nth-child(2) { width: 110px; }
.list td {
    height: 23px;
    padding: 0 4px;
    line-height: 20px;
    vertical-align: top;
}
.list td:first-child {
    padding: 0 0 0 1px;
}
.list .selected td {
    background-color: #0078d7;
    color: #fff;
}
.pick {
    display: flex;
    gap: 8px;
    padding-top: 1px;
}
.focus {
    width: 15px;
    height: 21px;
    border: 1px solid transparent;
}
.selected .focus {
    border: 1px dotted #ff8728;
}
.list input[type="checkbox"] {
    border-color: #222;
}
.dialog-buttons {
    display: flex;
    justify-content: flex-end;
    gap: 11px;
    padding: 5px 7px 0;
}
.dialog-buttons button {
    width: 73px;
    height: 25px;
    background-color: #e1e1e1;
    border: 1px solid #adadad;
}
.dialog-buttons .ok {
    border: 2px solid #0078d7;
}
.grip {
    position: absolute;
    right: 2px;
    bottom: 2px;
}
.marks {
    position: absolute;
    left: 0;
    top: 0;
    pointer-events: none;
}
```
